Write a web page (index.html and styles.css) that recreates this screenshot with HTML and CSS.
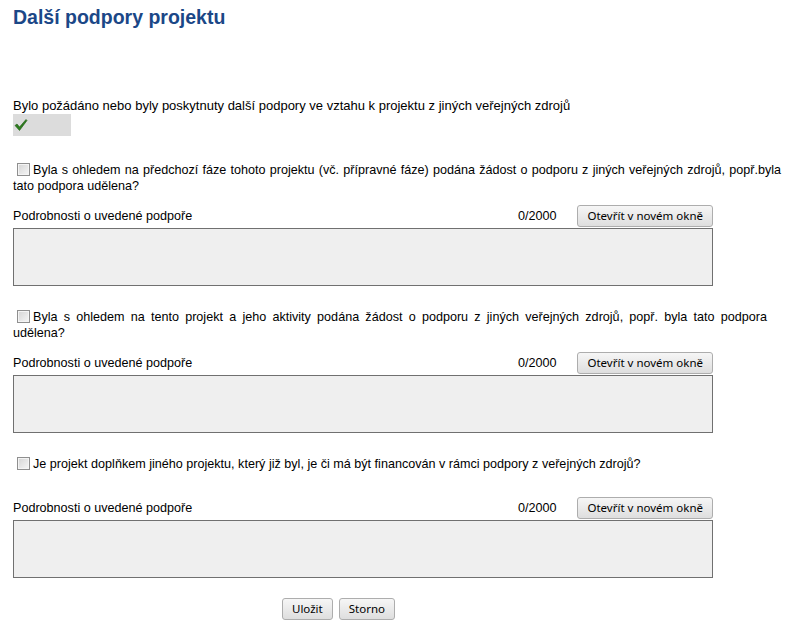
FILE: index.html
```html
<!DOCTYPE html>
<html lang="cs">
<head>
    <meta charset="UTF-8">
    <title>Další podpory projektu</title>
    <link rel="stylesheet" href="styles.css">
</head>
<body>
    <div class="page">
        <h1>Další podpory projektu</h1>

        <div class="intro">
            <div>Bylo požádáno nebo byly poskytnuty další podpory ve vztahu k projektu z jiných veřejných zdrojů</div>
            <div class="flag">
                <svg width="14" height="14" viewBox="0 0 14 14">
                    <path d="M1 7.5 L3 6 L5.5 9 L12 1.5 L13 2.5 L5.5 12.5 Z" fill="#2e7d1e" stroke="#1d5a12" stroke-width="0.6" stroke-linejoin="round"/>
                </svg>
            </div>
        </div>

        <div class="block first">
            <p class="question"><input type="checkbox" class="check">Byla s ohledem na předchozí fáze tohoto projektu (vč. přípravné fáze) podána žádost o podporu z jiných veřejných zdrojů, popř.byla tato podpora udělena?</p>
            <div class="detail-row">
                <span class="label">Podrobnosti o uvedené podpoře</span>
                <span class="counter">0/2000</span>
                <button class="btn">Otevřít v novém okně</button>
            </div>
            <textarea class="detail"></textarea>
        </div>

        <div class="block">
            <p class="question q2"><input type="checkbox" class="check">Byla s ohledem na tento projekt a jeho aktivity podána žádost o podporu z jiných veřejných zdrojů, popř. byla tato podpora udělena?</p>
            <div class="detail-row">
                <span class="label">Podrobnosti o uvedené podpoře</span>
                <span class="counter">0/2000</span>
                <button class="btn">Otevřít v novém okně</button>
            </div>
            <textarea class="detail"></textarea>
        </div>

        <div class="block">
            <p class="question single"><input type="checkbox" class="check">Je projekt doplňkem jiného projektu, který již byl, je či má být financován v rámci podpory z veřejných zdrojů?</p>
            <div class="detail-row">
                <span class="label">Podrobnosti o uvedené podpoře</span>
                <span class="counter">0/2000</span>
                <button class="btn">Otevřít v novém okně</button>
            </div>
            <textarea class="detail"></textarea>
        </div>

        <div class="actions">
            <button class="btn">Uložit</button>
            <button class="btn">Storno</button>
        </div>
    </div>
</body>
</html>
```

FILE: styles.css
```css
body {
    margin: 0;
    font-family: "Liberation Sans", Arial, sans-serif;
    font-size: 12.6px;
    color: #000;
    background: #fff;
}
.page {
    padding: 0 7px 0 13px;
}
h1 {
    margin: 0;
    padding-top: 6px;
    font-size: 19.5px;
    line-height: 22px;
    color: #1b4787;
}
.intro {
    margin-top: 70px;
    line-height: 16px;
    font-size: 13px;
}
.flag {
    width: 58px;
    height: 22px;
    background: #dcdcdc;
    display: flex;
    align-items: center;
    padding-left: 1px;
    box-sizing: border-box;
}
.block {
    margin-top: 23px;
}
.block.first {
    margin-top: 26px;
}
.question {
    margin: 0;
    line-height: 16px;
    text-align: justify;
    width: 768px;
}
.question.q2 {
    width: 754px;
}
.question.single {
    padding-bottom: 14px;
}
.check {
    appearance: none;
    width: 13px;
    height: 13px;
    margin: 0 3px 0 4px;
    vertical-align: -2px;
    border: 1px solid #8f8f8f;
    background: linear-gradient(135deg, #d4d4d4, #f6f6f6);
    box-shadow: inset 0 0 0 1px #f4f4f4;
}
.detail-row {
    display: flex;
    align-items: center;
    width: 700px;
    margin-top: 11px;
    height: 22px;
}
.label {
    flex: 1;
}
.counter {
    margin-right: 21px;
}
.btn {
    font-family: "Noto Sans", "Open Sans", sans-serif;
    font-size: 11.5px;
    height: 22px;
    padding: 0 9px;
    border: 1px solid #adadad;
    border-radius: 3px;
    background: linear-gradient(#f6f6f6, #dedede);
    color: #000;
    line-height: 18px;
}
.detail {
    display: block;
    box-sizing: border-box;
    width: 700px;
    height: 58px;
    margin: 1px 0 0;
    border: 1px solid #707070;
    background: #efefef;
    resize: none;
}
.actions {
    margin-top: 20px;
    display: flex;
    gap: 6px;
    padding-left: 269px;
}
```
